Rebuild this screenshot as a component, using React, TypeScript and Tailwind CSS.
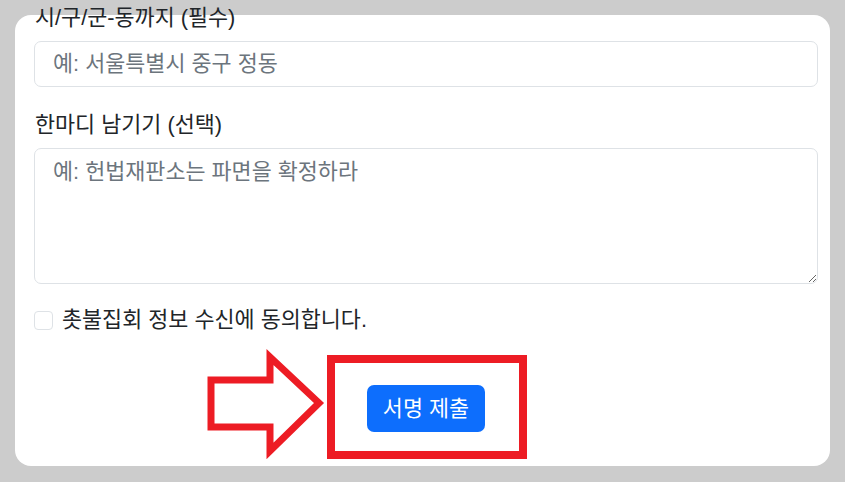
import React from 'react';

const font = "font-['Liberation_Sans','Noto_Sans_CJK_KR',sans-serif]";

function ArrowMark() {
  return (
    <svg
      className="absolute left-[200px] top-[345px]"
      width="130"
      height="120"
      viewBox="200 345 130 120"
    >
      <polygon
        points="211,380 270,380 270,357 319,403 270,451 270,427 211,427"
        fill="none"
        stroke="#ed1c24"
        strokeWidth="7"
        strokeLinejoin="miter"
      />
    </svg>
  );
}

export default function App() {
  return (
    <div className={`relative w-[845px] h-[482px] overflow-hidden bg-[#cccccc] pt-[15px] ${font}`}>
      <div className="flow-root mx-[15px] bg-white rounded-2xl pl-[19px] pr-[12px] pb-[34px]">
        <label className="block -mt-[12px] mb-2 text-[21.8px] leading-[30px] text-[#212529] pl-px">
          시/구/군-동까지 (필수)
        </label>
        <input
          type="text"
          placeholder="예: 서울특별시 중구 정동"
          className="block w-full h-[46px] border border-[#dee2e6] rounded-[7px] pl-[18px] text-[21.8px] leading-[30px] text-[#212529] placeholder:text-[#6c757d] outline-none"
        />

        <label className="block mt-[23px] mb-2 text-[21.8px] leading-[30px] text-[#212529] pl-px">
          한마디 남기기 (선택)
        </label>
        <textarea
          placeholder="예: 헌법재판소는 파면을 확정하라"
          className="block w-full h-[136px] border border-[#dee2e6] rounded-[7px] pl-[18px] py-2 text-[21.8px] leading-[30px] text-[#212529] placeholder:text-[#6c757d] outline-none"
        />

        <div className="flex items-center gap-[9px] mt-[21px] h-[30px]">
          <input
            type="checkbox"
            className="appearance-none w-[19px] h-[19px] border border-[#dee2e6] rounded-[4px] bg-white"
          />
          <span className="text-[21.8px] leading-[30px] text-[#212529]">촛불집회 정보 수신에 동의합니다.</span>
        </div>

        <div className="flex justify-center mt-[50px]">
          <button className="h-[47px] px-4 rounded-[7px] bg-[#0d6efd] text-white text-[21.8px] leading-[30px]">
            서명 제출
          </button>
        </div>
      </div>

      <ArrowMark />
      <div className="absolute left-[327px] top-[355px] w-[200px] h-[104px] border-[8px] border-[#ed1c24]" />
    </div>
  );
}
